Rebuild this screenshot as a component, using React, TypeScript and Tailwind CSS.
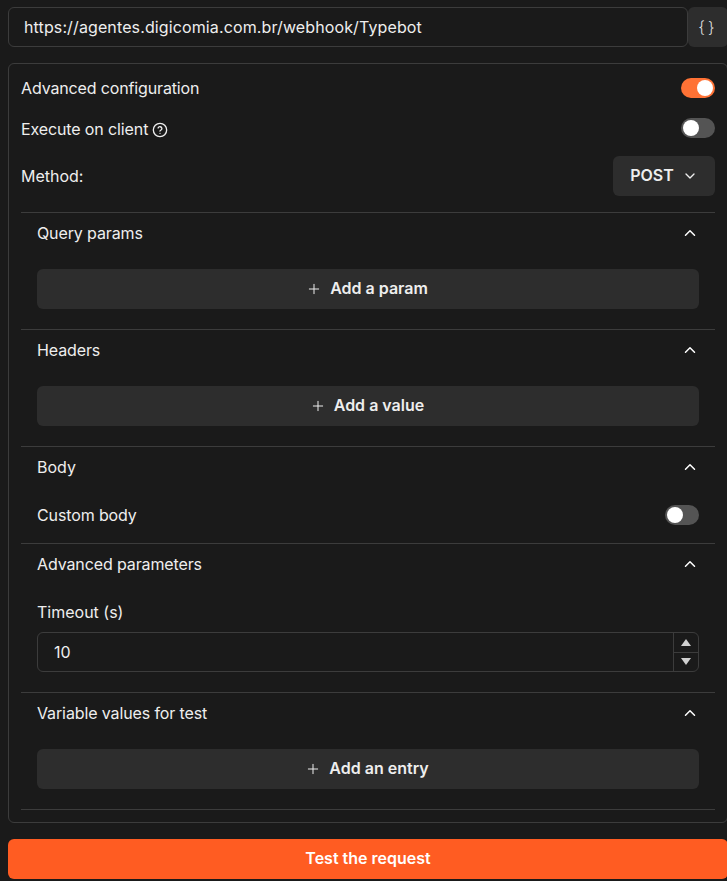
import { ChevronDown, ChevronUp, Plus } from 'lucide-react';

function Toggle({ on }: { on?: boolean }) {
  return (
    <div className={`flex h-5 w-[34px] items-center rounded-full p-0.5 ${on ? 'justify-end bg-[#ff7235]' : 'justify-start bg-[#545454]'}`}>
      <div className="h-4 w-4 rounded-full bg-white" />
    </div>
  );
}

function AddButton({ label }: { label: string }) {
  return (
    <div className="flex h-10 items-center justify-center gap-2 rounded-md bg-[#2d2d2d] pr-0.5 font-semibold text-[#eeeeee]">
      <Plus size={16} strokeWidth={1.5} />
      <span className="-mt-0.5">{label}</span>
    </div>
  );
}

function Section({ title, children }: { title: string; children: React.ReactNode }) {
  return (
    <div className="border-t border-[#3c3c3c] pb-5">
      <div className="flex h-10 items-center justify-between px-4">
        <span className="tracking-[-0.12px] text-[#eeeeee]">{title}</span>
        <ChevronUp size={18} strokeWidth={2} className="text-white" />
      </div>
      <div className="px-4 pt-4">{children}</div>
    </div>
  );
}

export default function App() {
  return (
    <div className="h-[881px] overflow-hidden bg-[#1a1a1a]">
      <div className="w-[728px] pl-2 pt-[7px] font-['Inter',sans-serif] text-base text-[#eeeeee]">
        {/* URL */}
        <div className="flex">
          <div className="flex h-10 flex-1 items-center rounded-md border border-[#3c3c3c] pl-[15px] pr-4 tracking-[0.12px]">
            https://agentes.digicomia.com.br/webhook/Typebot
          </div>
          <div className="flex h-10 w-10 items-center justify-center rounded-md bg-[#2d2d2d] text-[16px] font-light tracking-[3px] text-[#dddddd]">
            {'{}'}
          </div>
        </div>

        {/* Settings panel */}
        <div className="mt-4 h-[760px] rounded-md border border-[#3c3c3c] px-3 pt-[14px]">
          <div className="flex h-5 items-center justify-between">
            <span className="tracking-[-0.14px]">Advanced configuration</span>
            <Toggle on />
          </div>
          <div className="mt-5 flex h-5 items-center justify-between">
            <span className="flex items-center gap-1 pt-px tracking-[-0.12px]">
              Execute on client
              <svg className="mt-0.5" width="16" height="16" viewBox="0 0 24 24" fill="none" stroke="currentColor" strokeWidth="2" strokeLinecap="round">
                <circle cx="12" cy="12" r="10" />
                <path d="M9.1 9a3 3 0 0 1 5.8 1c0 2-3 2.6-3 3.6" />
                <path d="M12 17h.01" />
              </svg>
            </span>
            <Toggle />
          </div>
          <div className="mt-[18px] flex h-10 items-center justify-between">
            <span>Method:</span>
            <div className="flex h-10 w-[102px] items-center justify-center gap-2 rounded-md bg-[#2d2d2d] font-semibold">
              <span className="-mt-0.5">POST</span>
              <ChevronDown size={16} strokeWidth={2} />
            </div>
          </div>

          <div className="mt-4">
            <Section title="Query params">
              <AddButton label="Add a param" />
            </Section>
            <Section title="Headers">
              <AddButton label="Add a value" />
            </Section>
            <div className="h-[97px] border-t border-[#3c3c3c]">
              <div className="flex h-10 items-center justify-between px-4">
                <span>Body</span>
                <ChevronUp size={18} strokeWidth={2} className="text-white" />
              </div>
              <div className="mt-[18px] flex h-5 items-center justify-between px-4">
                <span className="tracking-[-0.12px]">Custom body</span>
                <Toggle />
              </div>
            </div>
            <Section title="Advanced parameters">
              <div className="mb-2 flex h-6 items-center">Timeout (s)</div>
              <div className="flex h-10 rounded-md border border-[#3c3c3c]">
                <span className="flex flex-1 items-center px-4">10</span>
                <div className="flex w-[25px] flex-col border-l border-[#3c3c3c] text-[#d0d0d0]">
                  <div className="flex flex-1 items-center justify-center border-b border-[#3c3c3c]">
                    <svg width="10" height="7" viewBox="0 0 10 7" fill="currentColor"><path d="M5 0l5 7H0z" /></svg>
                  </div>
                  <div className="flex flex-1 items-center justify-center">
                    <svg width="10" height="7" viewBox="0 0 10 7" fill="currentColor"><path d="M0 0h10L5 7z" /></svg>
                  </div>
                </div>
              </div>
            </Section>
            <Section title="Variable values for test">
              <AddButton label="Add an entry" />
            </Section>
            <div className="border-t border-[#3c3c3c]" />
          </div>
        </div>

        <div className="mt-4 flex h-10 items-center justify-center rounded-md bg-[#ff5c22] font-semibold text-white">
          <span className="-mt-0.5">Test the request</span>
        </div>
      </div>
    </div>
  );
}
